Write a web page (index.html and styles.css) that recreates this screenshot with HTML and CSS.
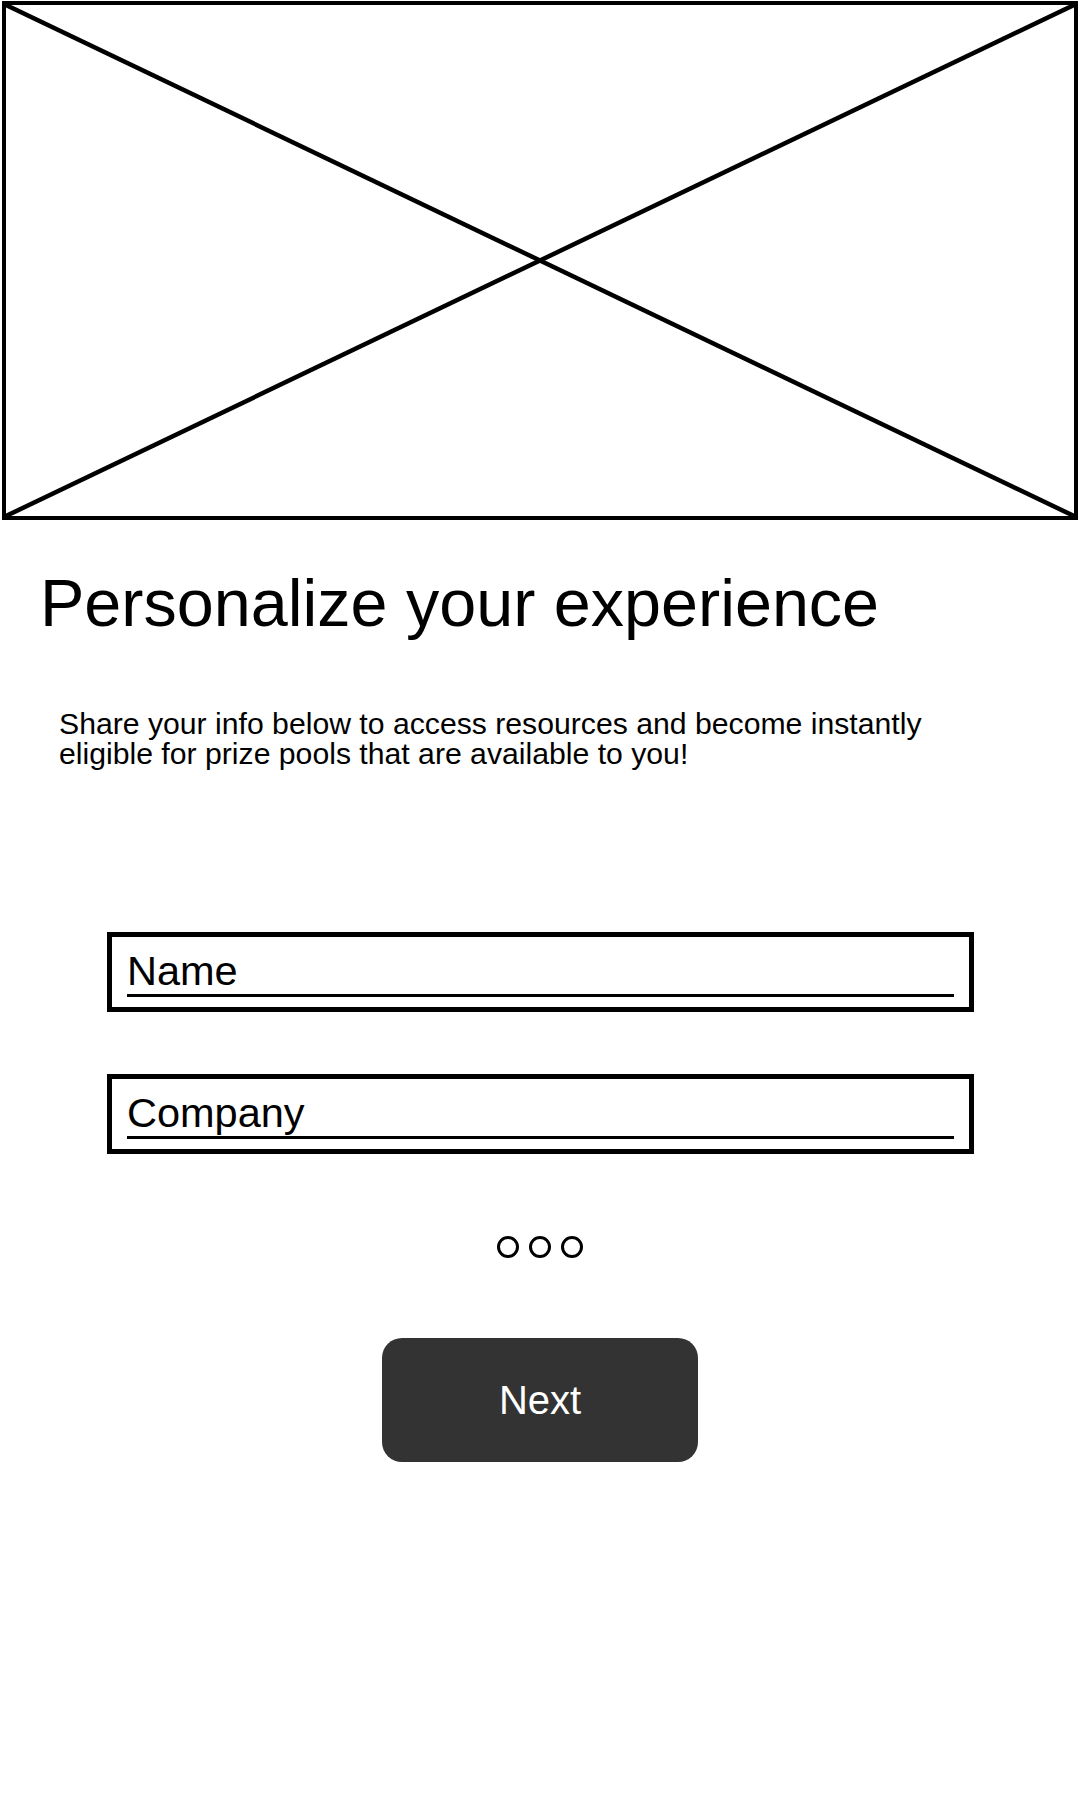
FILE: index.html
```html
<!DOCTYPE html>
<html lang="en">
<head>
<meta charset="utf-8">
<title>Personalize your experience</title>
<link rel="stylesheet" href="styles.css">
</head>
<body>
<div class="hero">
  <svg class="hero-x" viewBox="0 0 100 100" preserveAspectRatio="none" aria-hidden="true">
    <line x1="0" y1="0" x2="100" y2="100" vector-effect="non-scaling-stroke"/>
    <line x1="100" y1="0" x2="0" y2="100" vector-effect="non-scaling-stroke"/>
  </svg>
</div>
<h1 class="title">Personalize your experience</h1>
<p class="intro">Share your info below to access resources and become instantly<br>eligible for prize pools that are available to you!</p>
<div class="form">
  <div class="field"><div class="field-label">Name</div></div>
  <div class="field"><div class="field-label">Company</div></div>
  <div class="dots"><span class="dot"></span><span class="dot"></span><span class="dot"></span></div>
  <button class="next">Next</button>
</div>
</body>
</html>
```
FILE: styles.css
```css
html, body {
  margin: 0;
  padding: 0;
  background: #fff;
}
body {
  font-family: "Liberation Sans", Arial, sans-serif;
  color: #000;
  width: 1080px;
}
.hero {
  box-sizing: border-box;
  margin: 1px 2px 0 2px;
  width: 1076px;
  height: 519px;
  border: 4px solid #000;
}
.hero-x {
  display: block;
  width: 100%;
  height: 100%;
}
.hero-x line {
  stroke: #000;
  stroke-width: 4.5;
}
.title {
  margin: 45px 0 0 40px;
  font-size: 66.5px;
  font-weight: normal;
  line-height: 76px;
}
.intro {
  margin: 68px 0 0 59px;
  font-size: 30.2px;
  line-height: 30px;
}
.form {
  display: flex;
  flex-direction: column;
  align-items: center;
  margin-top: 163px;
}
.field {
  box-sizing: border-box;
  width: 867px;
  height: 80px;
  margin-left: 1px;
  border: 5px solid #000;
  padding: 10px 15px 10px 15px;
}
.field + .field {
  margin-top: 62px;
}
.field-label {
  font-size: 41.5px;
  line-height: 47px;
  border-bottom: 3px solid #000;
}
.dots {
  display: flex;
  gap: 10px;
  margin-top: 82px;
}
.dot {
  box-sizing: border-box;
  width: 22px;
  height: 22px;
  border: 3px solid #000;
  border-radius: 50%;
}
.next {
  margin-top: 80px;
  width: 316px;
  height: 124px;
  border: none;
  border-radius: 20px;
  background: #333333;
  color: #fff;
  font-family: "Liberation Sans", Arial, sans-serif;
  font-size: 40px;
  padding: 0;
}
```
